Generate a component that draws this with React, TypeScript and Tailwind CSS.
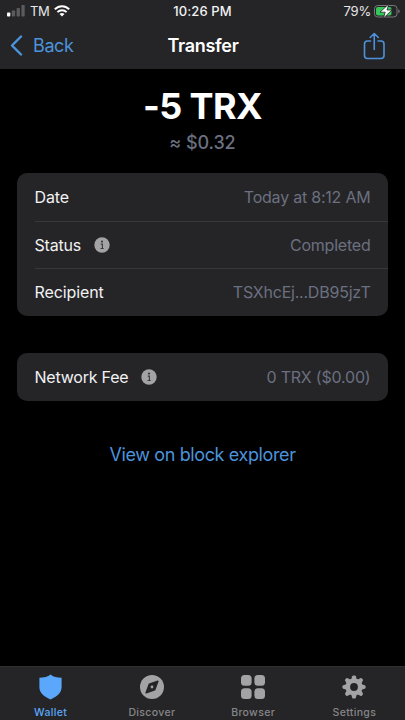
import React from 'react';

const DETAILS = [
  { label: 'Date', value: 'Today at 8:12 AM', info: false },
  { label: 'Status', value: 'Completed', info: true },
  { label: 'Recipient', value: 'TSXhcEj...DB95jzT', info: false },
];

const TEETH = [0, 45, 90, 135, 180, 225, 270, 315];

const InfoIcon = () => (
  <svg width="16" height="16" viewBox="0 0 16 16">
    <circle cx="8" cy="8" r="7.7" fill="#a3a3a5" />
    <circle cx="8" cy="4.6" r="1.1" fill="#3a3a3c" />
    <path d="M6.7 7.1H8.4V11.400M6.500 11.500h3.200" fill="none" stroke="#3a3a3c" strokeWidth="1.100" />
  </svg>
);

const ShieldIcon = () => (
  <svg width="24" height="26" viewBox="0 0 24 26">
    <path d="M11.500.5C9 2.6 4.800 3.700.400 3.700V13c0 5.800 4.300 9.500 11.100 12.500C18.300 22.500 22.600 18.800 22.600 13V3.700C18.200 3.700 14 2.600 11.500.5Z" fill="#5aa7fb" />
  </svg>
);

const CompassIcon = () => (
  <svg width="24" height="26" viewBox="0 0 24 26">
    <circle cx="12" cy="13" r="12" fill="#a3a3a5" />
    <path d="M17.800 7.200 14.700 15.700 6.200 18.800 9.300 10.300Z" fill="#252527" stroke="#252527" strokeWidth="1.600" strokeLinejoin="round" />
    <circle cx="12" cy="13" r="1.400" fill="#a3a3a5" />
  </svg>
);

const GridIcon = () => (
  <svg width="24" height="26" viewBox="0 0 24 26" fill="#a3a3a5">
    <rect x="0" y="1" width="10.600" height="10.800" rx="3.500" />
    <rect x="13.400" y="1" width="10.600" height="10.800" rx="3.500" />
    <rect x="0" y="14.300" width="10.600" height="10.800" rx="3.500" />
    <rect x="13.400" y="14.300" width="10.600" height="10.800" rx="3.500" />
  </svg>
);

const GearIcon = () => (
  <svg width="24" height="26" viewBox="0 0 24 26">
    {TEETH.map((angle) => (
      <path key={angle} d="M9 6.200 10.200 2.300Q10.500 1.400 11.400 1.400H12.600Q13.500 1.400 13.800 2.300L15 6.200Z" fill="#a3a3a5" transform={`rotate(${angle} 12 13)`} />
    ))}
    <circle cx="12" cy="13" r="6.200" fill="none" stroke="#a3a3a5" strokeWidth="4.600" />
  </svg>
);

const TABS = [
  { label: 'Wallet', icon: ShieldIcon, active: true },
  { label: 'Discover', icon: CompassIcon, active: false },
  { label: 'Browser', icon: GridIcon, active: false },
  { label: 'Settings', icon: GearIcon, active: false },
];

const StatusBar = () => (
  <div className="grid h-[22px] grid-cols-3 items-center text-[13px] leading-[22px] text-[#e8e8ea]">
    <div className="flex items-center pl-[7px]">
      <svg width="18" height="12" viewBox="0 0 18 12" fill="#5b5b5d">
        <rect x="0" y="7.500" width="3.300" height="4" rx=".8" fill="#fff" />
        <rect x="4.800" y="5.500" width="3.300" height="6" rx=".8" />
        <rect x="9.600" y="3" width="3.300" height="8.500" rx=".8" />
        <rect x="14.400" y="0" width="3.300" height="11.500" rx=".8" />
      </svg>
      <span className="ml-[5px] tracking-[-0.5px]">TM</span>
      <svg className="ml-[5px]" width="16" height="12" viewBox="0 0 16 12" fill="none" stroke="#fff" strokeWidth="2">
        <path d="M.8 4.300C5 .2 11 .2 15.200 4.300M3.400 7.100C6 4.600 10 4.600 12.600 7.100" />
        <path d="M8 11.500 5.500 9Q8 7 10.500 9Z" fill="#fff" stroke="none" />
      </svg>
    </div>
    <div className="text-center font-medium tracking-[0.1px] text-[#f2f2f4]">10:26 PM</div>
    <div className="flex items-center justify-end pr-[5px]">
      <span className="tracking-[-0.2px]">79%</span>
      <svg className="ml-[3px]" width="26" height="16" viewBox="0 0 26 16">
        <rect x=".5" y="2.500" width="22.500" height="11.500" rx="3.200" fill="none" stroke="#78787a" />
        <rect x="2" y="4" width="15.500" height="8.500" rx="1.800" fill="#35c759" />
        <path d="M24.300 6.200q1.400.6 1.400 2t-1.400 2Z" fill="#78787a" />
        <path d="M14.800 1 6 9.200h5.200L9.400 15.200 18 7h-5Z" fill="#fff" stroke="#252527" strokeWidth=".8" />
      </svg>
    </div>
  </div>
);

const Label = ({ text, info }: { text: string; info: boolean }) => (
  <div className="flex items-center gap-[13px] text-[#f2f2f4]">
    <span className={info ? 'tracking-[-0.22px]' : 'tracking-[-0.1px]'}>{text}</span>
    {info && <InfoIcon />}
  </div>
);

export default function App() {
  return (
    <div className="flex h-[720px] w-[405px] flex-col overflow-hidden bg-black font-['Inter',sans-serif] text-white">
      <header className="h-[69px] shrink-0 bg-[#252527]">
        <StatusBar />
        <nav className="grid h-[47px] grid-cols-3 items-center">
          <button className="flex items-center pl-[10px] text-[18px] text-[#4c93dc]">
            <svg width="13" height="21" viewBox="0 0 13 21" fill="none" stroke="currentColor" strokeWidth="2.400" strokeLinecap="round" strokeLinejoin="round">
              <path d="M11 1.500 2 10.500l9 9" />
            </svg>
            <span className="ml-[10px] tracking-[-0.4px]">Back</span>
          </button>
          <h1 className="pl-px text-center text-[18px] font-semibold tracking-[-0.3px]">Transfer</h1>
          <button className="flex justify-end pr-[19px] text-[#4c93dc]">
            <svg width="23" height="28" viewBox="0 0 23 28" fill="none" stroke="currentColor" strokeWidth="1.600" strokeLinecap="round" strokeLinejoin="round">
              <path d="M7.500 9H4.500Q1.500 9 1.500 12V23.500Q1.500 26.500 4.500 26.500H18Q21 26.500 21 23.500V12Q21 9 18 9H15M11.250 17.500V1.500M7.200 5.500l4.050-4 4.050 4" />
            </svg>
          </button>
        </nav>
      </header>

      <main className="flex-1 px-[17px] pt-[16px]">
        <div className="text-center">
          <div className="text-[36px] font-bold leading-[42px] tracking-[-0.6px]">-5 TRX</div>
          <div className="mt-[4px] text-[18px] font-medium leading-[24px] tracking-[-0.1px] text-[#6b7080]">≈ $0.32</div>
        </div>

        <section className="mt-[18px] overflow-hidden rounded-[10px] bg-[#252527] pl-[17.5px] text-[16px] leading-[24px]">
          {DETAILS.map((row) => (
            <div key={row.label} className="flex h-[47.5px] items-center justify-between border-t border-[#38383a] pr-[17.5px] first:border-transparent">
              <Label text={row.label} info={row.info} />
              <span className="tracking-[-0.22px] text-[#6b7080]">{row.value}</span>
            </div>
          ))}
        </section>

        <section className="mt-[37px] flex h-[48px] items-center justify-between rounded-[10px] bg-[#252527] pl-[17.5px] pr-[17.5px] text-[16px]">
          <Label text="Network Fee" info />
          <span className="tracking-[-0.2px] text-[#6b7080]">0 TRX ($0.00)</span>
        </section>

        <a className="mt-[41px] block text-center text-[18px] leading-[26px] tracking-[-0.38px] text-[#4c93dc]">View on block explorer</a>
      </main>

      <footer className="grid h-[54px] shrink-0 grid-cols-4 border-t border-[#303032] bg-[#252527] pt-[7px]">
        {TABS.map(({ label, icon: Icon, active }) => (
          <div key={label} className={`flex flex-col items-center ${active ? 'text-[#5aa7fb]' : 'text-[#858587]'}`}>
            <Icon />
            <span className="mt-[6px] text-[10.5px] font-medium leading-[14px] tracking-[0.35px]">{label}</span>
          </div>
        ))}
      </footer>
    </div>
  );
}
